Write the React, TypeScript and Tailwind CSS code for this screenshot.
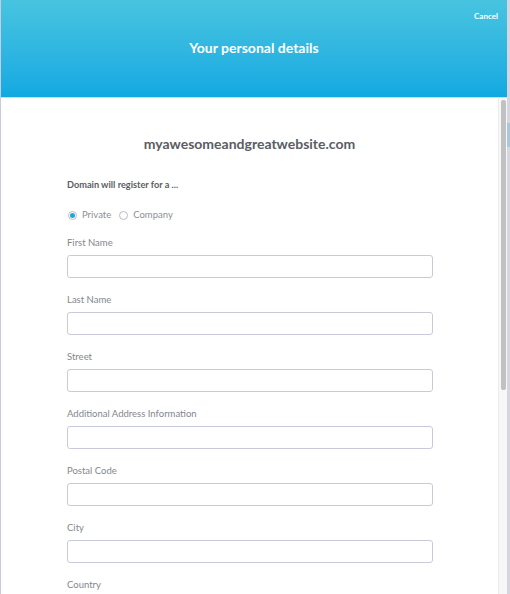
import React from 'react'

const fields = [
  'First Name',
  'Last Name',
  'Street',
  'Additional Address Information',
  'Postal Code',
  'City',
  'Country',
]

function Radio({ checked, label }: { checked?: boolean; label: string }) {
  return (
    <label className="flex items-center gap-[5px]">
      <span className="w-[9px] h-[9px] rounded-full border border-[#b9bcc6] bg-white flex items-center justify-center">
        {checked && <span className="w-[5px] h-[5px] rounded-full bg-[#1ea5e3]" />}
      </span>
      <span>{label}</span>
    </label>
  )
}

export default function App() {
  return (
    <div
      className="w-[510px] h-[594px] flex overflow-hidden bg-white"
      style={{ fontFamily: 'Lato, "Open Sans", sans-serif' }}
    >
      <div className="w-[507px] h-full flex flex-col border-l border-[#c9cce0]">
        <div className="h-[97px] shrink-0 bg-gradient-to-b from-[#47c4df] to-[#10a9e2] relative flex items-center justify-center">
          <h1 className="text-white font-bold text-[14px] leading-5 -mt-[2px]">Your personal details</h1>
          <button className="absolute right-[9px] top-[10px] text-white font-bold text-[8px] leading-3">
            Cancel
          </button>
        </div>
        <div className="h-px bg-[#b9e4f5] shrink-0" />
        <div className="flex-1 flex min-h-0">
          <div className="flex-1 pt-[36px]">
            <h2 className="text-center font-bold text-[14px] leading-5 text-[#5a5d64]">
              myawesomeandgreatwebsite.com
            </h2>
            <div className="ml-[66px] w-[366px]">
              <p className="mt-[25px] font-bold text-[9.2px] leading-3 text-[#5a5d64]">
                Domain will register for a ...
              </p>
              <div className="mt-[17px] flex items-center gap-[8px] text-[9.5px] leading-[14px] text-[#8c8f96] pl-px">
                <Radio checked label="Private" />
                <Radio label="Company" />
              </div>
              <div className="mt-[14px] flex flex-col">
                {fields.map((f) => (
                  <div key={f} className="mb-[15px]">
                    <label className="block text-[9.5px] leading-[14px] text-[#84878e]">{f}</label>
                    <input
                      className="mt-[5px] block w-full h-[23px] border border-[#c8cadb] rounded-[3px] bg-white"
                      type="text"
                    />
                  </div>
                ))}
              </div>
            </div>
          </div>
          <div className="w-[9px] shrink-0 bg-[#f7f7f8] border-l border-[#ececee] pt-[2px] flex justify-center">
            <div className="w-[5px] h-[290px] rounded-[2px] bg-[#c1c1c1]" />
          </div>
        </div>
      </div>
      <div className="w-[3px] h-full bg-[#d5d6de] flex flex-col pt-[123px]">
        <div className="h-[24px] bg-[#a9c8dc]" />
      </div>
    </div>
  )
}
